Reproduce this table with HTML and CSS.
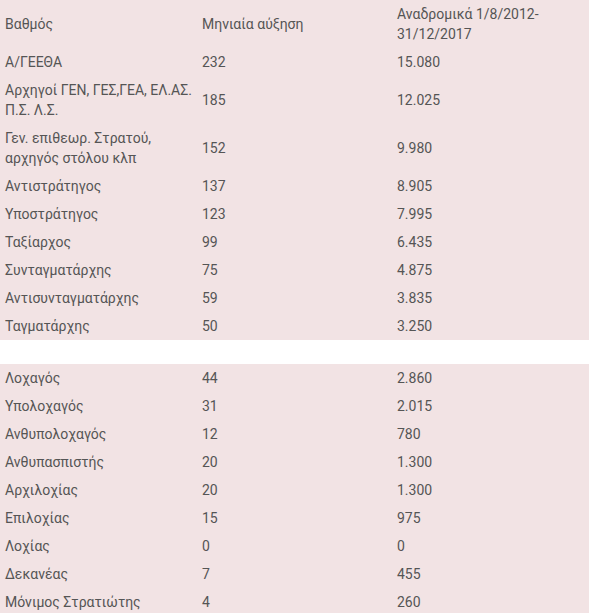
FILE: index.html
```html
<!DOCTYPE html>
<html lang="el">
<head>
<meta charset="utf-8">
<link rel="stylesheet" href="styles.css">
</head>
<body>
<table class="grades">
  <colgroup><col class="c1"><col class="c2"><col class="c3"></colgroup>
  <tbody>
    <tr><td>Βαθμός</td><td>Μηνιαία αύξηση</td><td>Αναδρομικά 1/8/2012-<br>31/12/2017</td></tr>
    <tr><td>Α/ΓΕΕΘΑ</td><td>232</td><td>15.080</td></tr>
    <tr><td>Αρχηγοί ΓΕΝ, ΓΕΣ,ΓΕΑ, ΕΛ.ΑΣ.<br>Π.Σ. Λ.Σ.</td><td>185</td><td>12.025</td></tr>
    <tr><td>Γεν. επιθεωρ. Στρατού,<br>αρχηγός στόλου κλπ</td><td>152</td><td>9.980</td></tr>
    <tr><td>Αντιστράτηγος</td><td>137</td><td>8.905</td></tr>
    <tr><td>Υποστράτηγος</td><td>123</td><td>7.995</td></tr>
    <tr><td>Ταξίαρχος</td><td>99</td><td>6.435</td></tr>
    <tr><td>Συνταγματάρχης</td><td>75</td><td>4.875</td></tr>
    <tr><td>Αντισυνταγματάρχης</td><td>59</td><td>3.835</td></tr>
    <tr><td>Ταγματάρχης</td><td>50</td><td>3.250</td></tr>
    <tr class="spacer"><td></td><td></td><td></td></tr>
    <tr><td>Λοχαγός</td><td>44</td><td>2.860</td></tr>
    <tr><td>Υπολοχαγός</td><td>31</td><td>2.015</td></tr>
    <tr><td>Ανθυπολοχαγός</td><td>12</td><td>780</td></tr>
    <tr><td>Ανθυπασπιστής</td><td>20</td><td>1.300</td></tr>
    <tr><td>Αρχιλοχίας</td><td>20</td><td>1.300</td></tr>
    <tr><td>Επιλοχίας</td><td>15</td><td>975</td></tr>
    <tr><td>Λοχίας</td><td>0</td><td>0</td></tr>
    <tr><td>Δεκανέας</td><td>7</td><td>455</td></tr>
    <tr><td>Μόνιμος Στρατιώτης</td><td>4</td><td>260</td></tr>
  </tbody>
</table>
</body>
</html>
```
FILE: styles.css
```css
html, body {
  margin: 0;
  padding: 0;
  background: #ffffff;
}
body {
  font-family: Roboto, "Noto Sans", sans-serif;
  font-size: 14px;
  line-height: 20px;
  color: #555555;
}
.grades {
  border-collapse: collapse;
  table-layout: fixed;
  width: 589px;
}
.c1 { width: 197px; }
.c2 { width: 195px; }
.c3 { width: 197px; }
.grades td {
  padding: 4px 5px;
  vertical-align: middle;
  background: #f2e3e4;
}
.grades .spacer td {
  background: #ffffff;
  height: 16px;
}
```
